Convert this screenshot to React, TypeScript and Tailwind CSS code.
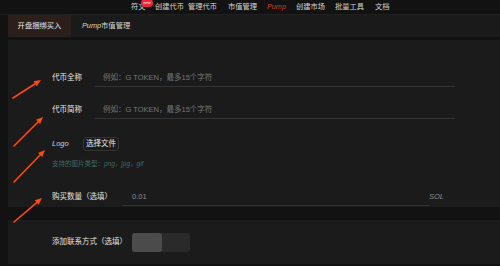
import React from "react";

const font = { fontFamily: '"Liberation Sans", "Noto Sans CJK SC", sans-serif' };

const navItems = [
  { label: "符文", w: "w-[24px]" },
  { label: "创建代币", w: "w-[33px]" },
  { label: "管理代币", w: "w-[40px]" },
  { label: "市值管理", w: "w-[39px]" },
  { label: "Pump", w: "w-[29px]", active: true },
  { label: "创建市场", w: "w-[39px]" },
  { label: "批量工具", w: "w-[40px]" },
  { label: "文档", w: "w-[30px]" },
];

const arrows = [
  { x1: 13, y1: 98, x2: 41, y2: 80 },
  { x1: 14, y1: 146, x2: 43, y2: 117 },
  { x1: 14, y1: 182, x2: 45, y2: 150 },
  { x1: 14, y1: 222, x2: 42, y2: 198 },
];

const Arrow: React.FC<{ x1: number; y1: number; x2: number; y2: number }> = ({ x1, y1, x2, y2 }) => {
  const a = Math.atan2(y2 - y1, x2 - x1);
  const len = 7;
  const half = 3;
  const bx = x2 - len * Math.cos(a);
  const by = y2 - len * Math.sin(a);
  const px = -Math.sin(a) * half;
  const py = Math.cos(a) * half;
  return (
    <g>
      <line x1={x1} y1={y1} x2={bx} y2={by} stroke="#ff4a0c" strokeWidth={1.6} strokeLinecap="round" />
      <polygon points={`${x2},${y2} ${bx + px},${by + py} ${bx - px},${by - py}`} fill="#ff4a0c" />
    </g>
  );
};

export default function App() {
  return (
    <div className="relative h-[266px] w-[500px] overflow-hidden bg-[#121212]" style={font}>
      {/* top nav */}
      <div className="flex h-[15px] items-center border-b border-[#1f1f1f] pl-[131px] text-[7.25px] text-[#d4d4d4]">
        {navItems.map((item, i) => (
          <div key={item.label} className={`relative ${item.w} shrink-0 leading-none`}>
            <span className={item.active ? "italic text-[#d8381c]" : ""}>{item.label}</span>
            {i === 0 && (
              <span className="absolute left-[10px] top-[-4px] flex h-[8px] w-[12px] items-center justify-center rounded-full bg-[#e8283c] text-[4px] italic leading-none text-white">
                new
              </span>
            )}
          </div>
        ))}
      </div>

      {/* tabs */}
      <div className="ml-[8px] flex h-[22px] items-stretch bg-[#1a1a1a] text-[7.3px]">
        <div className="flex w-[63px] items-center justify-center rounded-b-[2px] bg-[#2b1f1b] text-[#e6e6e6]">
          开盘捆绑买入
        </div>
        <div className="ml-[11px] flex items-center text-[#d8d8d8]">
          <span className="italic">Pump</span>市值管理
        </div>
      </div>

      <div className="h-[3px]" />

      {/* main form panel */}
      <div className="ml-[8px] flex h-[167px] flex-col bg-[#1b1b1b] pl-[44px] text-[7.5px]">
        <div className="mt-[29px] flex h-[18px] items-center">
          <div className="w-[43px] text-[#e4e4e4]">代币全称</div>
          <div className="flex h-full w-[360px] items-center border-b border-[#333333] pl-[8px] text-[#767676]">
            例如：G TOKEN，最多15个字符
          </div>
        </div>

        <div className="mt-[14px] flex h-[18px] items-center">
          <div className="w-[43px] text-[#e4e4e4]">代币简称</div>
          <div className="flex h-full w-[360px] items-center border-b border-[#333333] pl-[8px] text-[#767676]">
            例如：G TOKEN，最多15个字符
          </div>
        </div>

        <div className="mt-[17px] flex h-[16px] items-center">
          <div className="w-[31px] italic text-[#cfcfcf]">Logo</div>
          <div className="flex h-[14px] w-[36px] items-center justify-center rounded-[3px] border border-[#333333] text-[#e8e8e8]">
            选择文件
          </div>
        </div>

        <div className="mt-[7px] flex h-[10px] items-center text-[6.5px] text-[#3f6a6a]">
          支持的图片类型：<span className="italic">png，jpg，gif</span>
        </div>

        <div className="mt-[19px] flex h-[18px] items-center">
          <div className="w-[71px] text-[#e4e4e4]">购买数量（选填）</div>
          <div className="flex h-full w-[306px] items-center border-b border-[#333333] pl-[9px] text-[#8a8a8a]">
            0.01
          </div>
          <div className="italic text-[#8a8a8a]">SOL</div>
        </div>
      </div>

      <div className="h-[13px]" />

      {/* contact panel */}
      <div className="ml-[8px] flex h-[44px] items-center bg-[#1b1b1b] pl-[44px] text-[7.5px]">
        <div className="w-[80px] text-[#e4e4e4]">添加联系方式（选填）</div>
        <div className="flex h-[19px] w-[58px] rounded-[3px] bg-[#2a2a2a]">
          <div className="h-full w-[30px] rounded-[3px] bg-[#4b4b4b]" />
        </div>
      </div>

      {/* annotation arrows */}
      <svg className="pointer-events-none absolute inset-0" width={500} height={266}>
        {arrows.map((a, i) => (
          <Arrow key={i} {...a} />
        ))}
      </svg>
    </div>
  );
}
